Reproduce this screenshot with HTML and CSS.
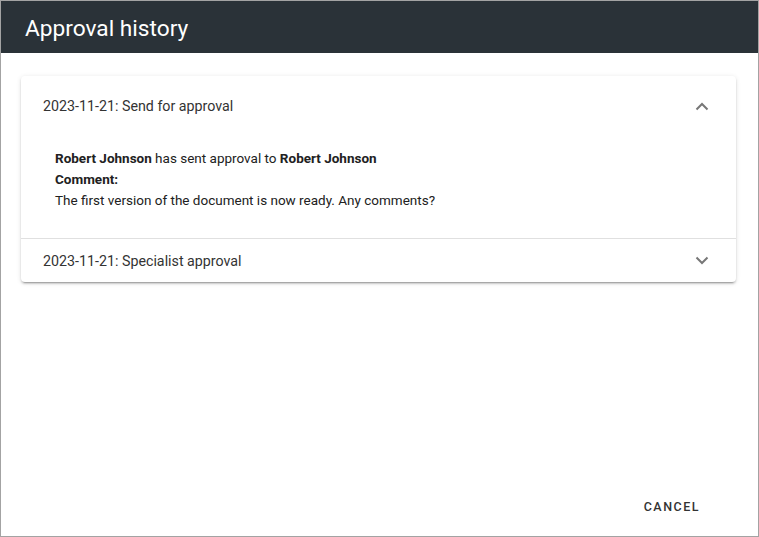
FILE: index.html
```html
<!DOCTYPE html>
<html lang="en">
<head>
<meta charset="utf-8">
<title>Approval history</title>
<link rel="stylesheet" href="styles.css">
</head>
<body>
<div class="dialog">
  <header class="dialog-title">Approval history</header>
  <main class="dialog-content">
    <section class="accordion">
      <div class="panel expanded">
        <div class="panel-header">
          <span class="panel-title">2023-11-21: Send for approval</span>
          <svg class="chevron" width="14" height="9" viewBox="0 0 14 9"><polyline points="1.5,7.5 7,2 12.5,7.5" fill="none" stroke="#777" stroke-width="2"/></svg>
        </div>
        <div class="panel-body">
          <p><b>Robert Johnson</b> has sent approval to <b>Robert Johnson</b></p>
          <p><b>Comment:</b></p>
          <p>The first version of the document is now ready. Any comments?</p>
        </div>
      </div>
      <div class="panel">
        <div class="panel-header collapsed">
          <span class="panel-title">2023-11-21: Specialist approval</span>
          <svg class="chevron" width="14" height="9" viewBox="0 0 14 9"><polyline points="1.5,1.5 7,7 12.5,1.5" fill="none" stroke="#777" stroke-width="2"/></svg>
        </div>
      </div>
    </section>
  </main>
  <footer class="dialog-actions">
    <button class="btn-text">Cancel</button>
  </footer>
</div>
</body>
</html>
```

FILE: styles.css
```css
* { box-sizing: border-box; }
html, body { margin: 0; padding: 0; background: #fff; }
body { font-family: Roboto, "Liberation Sans", Arial, sans-serif; }

.dialog {
  width: 759px;
  height: 537px;
  border: 1px solid #a3a3a3;
  display: flex;
  flex-direction: column;
  background: #fff;
}

.dialog-title {
  height: 52px;
  background: #2a3238;
  color: #fff;
  font-size: 22.7px;
  font-weight: 400;
  line-height: 48px;
  padding: 4px 0 0 24px;
  flex-shrink: 0;
}

.dialog-content {
  flex: 1;
  padding: 23px 22px 0 20px;
}

.accordion {
  background: #fff;
  border-radius: 4px;
  box-shadow: 0 3px 1px -2px rgba(0,0,0,.2), 0 2px 2px 0 rgba(0,0,0,.14), 0 1px 5px 0 rgba(0,0,0,.12);
}

.panel + .panel { border-top: 1px solid #e0e0e0; }

.panel-header {
  height: 60px;
  display: flex;
  align-items: center;
  justify-content: space-between;
  padding: 0 27px 0 22px;
}
.panel-header.collapsed { height: 43px; }

.panel-title {
  font-size: 14.25px;
  color: #333;
}

.chevron { display: block; }

.panel-body {
  padding: 12px 24px 27px 34px;
  font-size: 13.5px;
  color: #212121;
  line-height: 21px;
}
.panel-body p { margin: 0; }
.panel-body b { font-weight: 700; }

.dialog-actions {
  display: flex;
  justify-content: flex-end;
  padding: 0 42px 12px 0;
}

.btn-text {
  height: 36px;
  padding: 0 16px;
  border: none;
  background: transparent;
  font-family: inherit;
  font-size: 12.5px;
  font-weight: 500;
  letter-spacing: 1.5px;
  text-transform: uppercase;
  color: #333;
  cursor: pointer;
}
```
